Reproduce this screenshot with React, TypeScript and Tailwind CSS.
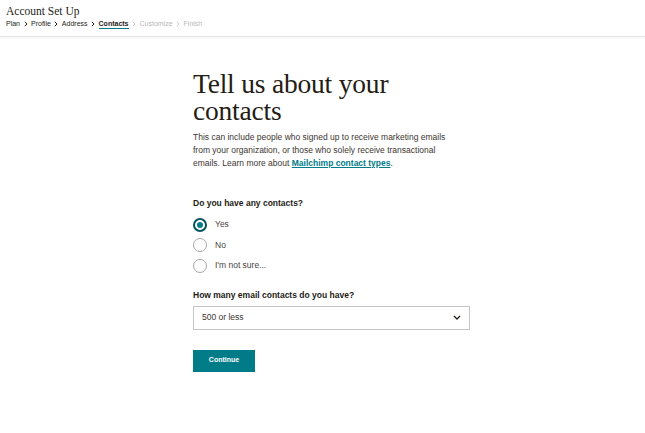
import { useState } from "react"

const sans = "font-['Liberation_Sans',_Arial,_sans-serif]"
const serif = "font-['Liberation_Serif',_'DejaVu_Serif',_serif]"

const steps = [
  { label: "Plan", state: "done" },
  { label: "Profile", state: "done" },
  { label: "Address", state: "done" },
  { label: "Contacts", state: "current" },
  { label: "Customize", state: "todo" },
  { label: "Finish", state: "todo" },
]

const options = ["Yes", "No", "I'm not sure..."]

function Chevron({ muted }: { muted?: boolean }) {
  return (
    <svg width="4" height="6" viewBox="0 0 4 6" className={muted ? "text-[#c8c8c8]" : "text-[#241c15]"}>
      <path d="M0.8 0.8L3 3L0.8 5.2" fill="none" stroke="currentColor" strokeWidth="1" />
    </svg>
  )
}

function Radio({ label, checked, onClick }: { label: string; checked: boolean; onClick: () => void }) {
  return (
    <button className="flex h-[14px] items-center gap-[8px]" onClick={onClick}>
      <span
        className={`flex h-[14px] w-[14px] items-center justify-center rounded-full ${
          checked ? "border-[2px] border-[#00525d]" : "border border-[#a8a8a8]"
        }`}
      >
        {checked && <span className="h-[6px] w-[6px] rounded-full bg-[#007c89]" />}
      </span>
      <span className="text-[8.5px] text-[#4a443e]">{label}</span>
    </button>
  )
}

export default function App() {
  const [answer, setAnswer] = useState(0)

  return (
    <div className={`min-h-[433px] bg-white text-[#241c15] ${sans}`}>
      <header className="h-[37px] border-b border-[#e6e6e6] px-[6px] pt-[4px] shadow-[0_1px_2px_rgba(0,0,0,0.05)]">
        <h1 className={`text-[11.5px] leading-[14px] ${serif}`}>Account Set Up</h1>
        <nav className="flex h-[11px] items-center gap-[3.5px] text-[7px] leading-[9px]">
          {steps.map((s, i) => (
            <span key={s.label} className="flex items-center gap-[3.5px]">
              {i > 0 && <Chevron muted={s.state === "todo"} />}
              <span
                className={
                  s.state === "current"
                    ? "border-b-[1.5px] border-[#007c89] font-bold"
                    : s.state === "todo"
                      ? "text-[#b8b8b8]"
                      : ""
                }
              >
                {s.label}
              </span>
            </span>
          ))}
        </nav>
      </header>

      <main className="flex justify-center pl-[18px] pt-[33px]">
        <div className="w-[277px]">
          <h2 className={`text-[27.5px] leading-[27px] tracking-[-0.2px] ${serif}`}>
            Tell us about your
            <br />
            contacts
          </h2>
          <p className="mt-[7px] w-[265px] text-[8.5px] leading-[13px] text-[#3c3630]">
            This can include people who signed up to receive marketing emails from your organization, or those who
            solely receive transactional emails. Learn more about{" "}
            <a className="font-bold text-[#007c89] underline">Mailchimp contact types</a>.
          </p>

          <p className="mt-[27px] text-[8.5px] font-bold leading-[13px]">Do you have any contacts?</p>
          <div className="mt-[7.5px] flex flex-col gap-[6.5px]">
            {options.map((o, i) => (
              <Radio key={o} label={o} checked={answer === i} onClick={() => setAnswer(i)} />
            ))}
          </div>

          <p className="mt-[16.5px] text-[8.5px] font-bold leading-[13px]">How many email contacts do you have?</p>
          <button className="mt-[3.5px] flex h-[24px] w-[277px] items-center justify-between border border-[#c4c4c4] px-[8px] text-[8.5px] text-[#3c3630]">
            <span>500 or less</span>
            <svg width="8" height="5" viewBox="0 0 8 5">
              <path d="M1 1l3 3 3-3" fill="none" stroke="#241c15" strokeWidth="1.3" />
            </svg>
          </button>

          <button className="mt-[20px] h-[22px] w-[62px] bg-[#007c89] text-[7px] font-bold text-white">
            Continue
          </button>
        </div>
      </main>
    </div>
  )
}
